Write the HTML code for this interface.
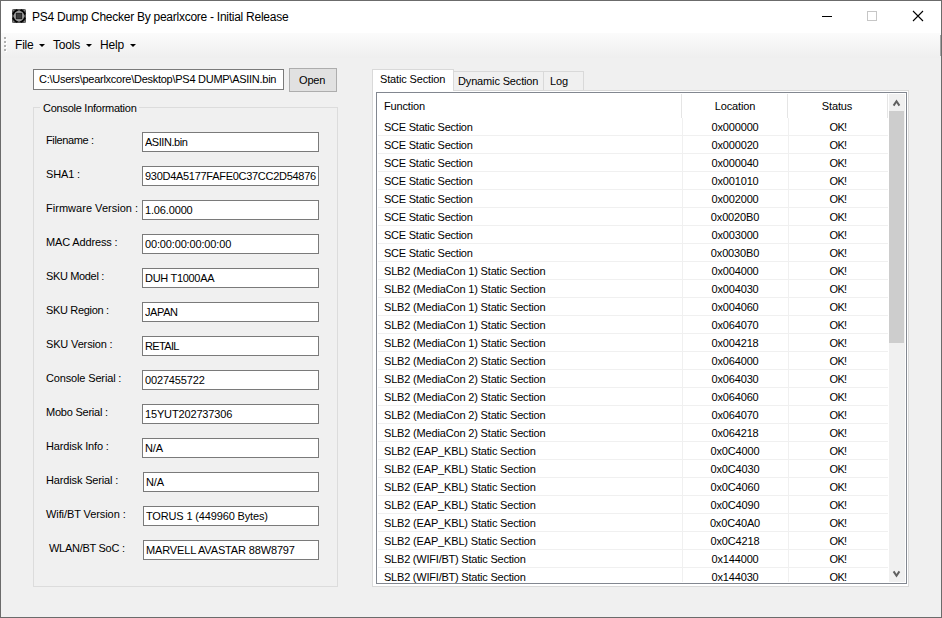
<!DOCTYPE html>
<html><head><meta charset="utf-8"><style>
*{margin:0;padding:0;box-sizing:border-box}
html,body{width:942px;height:618px;overflow:hidden;background:#f0f0f0}
body{position:relative;font-family:"Liberation Sans",sans-serif;font-size:11px;color:#000}
.a{position:absolute}
.t{position:absolute;white-space:pre;line-height:13px;font-size:11px;letter-spacing:-0.15px}
.c{position:absolute;white-space:pre;line-height:13px;font-size:11px;letter-spacing:-0.15px;text-align:center}
.tb{position:absolute;background:#fff;border:1px solid #7a7a7a}
</style></head><body>

<div class="a" style="left:0;top:0;width:942px;height:618px;border:1px solid #6b6b6b"></div>
<div class="a" style="left:1px;top:1px;width:940px;height:32px;background:#fff"></div>
<svg class="a" style="left:12px;top:9px" width="14" height="14" viewBox="0 0 14 14">
<rect x="0" y="0" width="14" height="14" rx="1.5" fill="#505050"/>
<path d="M1.6 4.6 L4.6 1.6 M9.4 1.6 L12.4 4.6 M1.6 9.4 L4.6 12.4 M12.4 9.4 L9.4 12.4" stroke="#000" stroke-width="2.4" stroke-linecap="round"/>
<circle cx="1.3" cy="1.3" r="0.7" fill="#8a8a8a"/><circle cx="12.7" cy="1.3" r="0.7" fill="#8a8a8a"/>
<circle cx="1.3" cy="12.7" r="0.7" fill="#8a8a8a"/><circle cx="12.7" cy="12.7" r="0.7" fill="#8a8a8a"/>
<circle cx="7" cy="7" r="4.0" fill="none" stroke="#9a9a9a" stroke-width="2.4"/>
<rect x="4.3" y="4.3" width="5.4" height="5.4" fill="#3a3a3a" stroke="#1c1c1c" stroke-width="0.8"/>
</svg>
<div class="a" style="left:32px;top:9px;font-size:12px;line-height:16px;white-space:pre;letter-spacing:-0.26px">PS4 Dump Checker By pearlxcore - Initial Release</div>
<div class="a" style="left:822px;top:16px;width:10px;height:1px;background:#000"></div>
<div class="a" style="left:867px;top:11px;width:10px;height:10px;border:1px solid #c6c6c6"></div>
<svg class="a" style="left:912px;top:10px" width="12" height="12" viewBox="0 0 12 12"><path d="M1 1 L11 11 M11 1 L1 11" stroke="#000" stroke-width="1.1"/></svg>
<div class="a" style="left:1px;top:33px;width:940px;height:25px;background:linear-gradient(#fbfbfb,#efefef)"></div>
<div class="a" style="left:5px;top:38px;width:2px;height:2px;background:#fff"></div>
<div class="a" style="left:4px;top:37px;width:2px;height:2px;background:#b0b0b0"></div>
<div class="a" style="left:5px;top:42px;width:2px;height:2px;background:#fff"></div>
<div class="a" style="left:4px;top:41px;width:2px;height:2px;background:#b0b0b0"></div>
<div class="a" style="left:5px;top:46px;width:2px;height:2px;background:#fff"></div>
<div class="a" style="left:4px;top:45px;width:2px;height:2px;background:#b0b0b0"></div>
<div class="a" style="left:5px;top:50px;width:2px;height:2px;background:#fff"></div>
<div class="a" style="left:4px;top:49px;width:2px;height:2px;background:#b0b0b0"></div>
<div class="a" style="left:15px;top:37px;font-size:12px;line-height:16px;white-space:pre;letter-spacing:-0.2px">File</div>
<div class="a" style="left:39px;top:44px;width:0;height:0;border-left:3px solid transparent;border-right:3px solid transparent;border-top:3px solid #000"></div>
<div class="a" style="left:53px;top:37px;font-size:12px;line-height:16px;white-space:pre;letter-spacing:-0.2px">Tools</div>
<div class="a" style="left:86px;top:44px;width:0;height:0;border-left:3px solid transparent;border-right:3px solid transparent;border-top:3px solid #000"></div>
<div class="a" style="left:100px;top:37px;font-size:12px;line-height:16px;white-space:pre;letter-spacing:-0.2px">Help</div>
<div class="a" style="left:130px;top:44px;width:0;height:0;border-left:3px solid transparent;border-right:3px solid transparent;border-top:3px solid #000"></div>
<div class="a" style="left:940px;top:35px;width:1px;height:21px;background:#a4a4a4"></div>
<div class="tb" style="left:33px;top:69px;width:251px;height:21px"></div>
<div class="t" style="left:39px;top:73px;letter-spacing:-0.265px">C:\Users\pearlxcore\Desktop\PS4 DUMP\ASIIN.bin</div>
<div class="a" style="left:289px;top:68px;width:48px;height:24px;background:#e1e1e1;border:1px solid #adadad"></div>
<div class="t" style="left:299px;top:74px;">Open</div>
<div class="a" style="left:33px;top:107px;width:305px;height:480px;border:1px solid #dcdcdc"></div>
<div class="a" style="left:40px;top:100px;width:99px;height:14px;background:#f0f0f0"></div>
<div class="t" style="left:43px;top:102px;letter-spacing:-0.26px">Console Information</div>
<div class="t" style="left:46px;top:134px;letter-spacing:-0.372px">Filename :</div>
<div class="tb" style="left:142px;top:132px;width:177px;height:20px"></div>
<div class="t" style="left:145px;top:136px;width:173px;overflow:hidden;letter-spacing:-0.463px">ASIIN.bin</div>
<div class="t" style="left:46px;top:168px;letter-spacing:-0.150px">SHA1 :</div>
<div class="tb" style="left:142px;top:166px;width:177px;height:20px"></div>
<div class="t" style="left:145px;top:170px;width:173px;overflow:hidden;letter-spacing:-0.288px">930D4A5177FAFE0C37CC2D54876</div>
<div class="t" style="left:46px;top:202px;letter-spacing:0.026px">Firmware Version :</div>
<div class="tb" style="left:142px;top:200px;width:177px;height:20px"></div>
<div class="t" style="left:145px;top:204px;width:173px;overflow:hidden;letter-spacing:-0.150px">1.06.0000</div>
<div class="t" style="left:46px;top:236px;letter-spacing:-0.150px">MAC Address :</div>
<div class="tb" style="left:142px;top:234px;width:177px;height:20px"></div>
<div class="t" style="left:145px;top:238px;width:173px;overflow:hidden;letter-spacing:-0.150px">00:00:00:00:00:00</div>
<div class="t" style="left:46px;top:270px;letter-spacing:-0.350px">SKU Model :</div>
<div class="tb" style="left:142px;top:268px;width:177px;height:20px"></div>
<div class="t" style="left:145px;top:272px;width:173px;overflow:hidden;letter-spacing:-0.300px">DUH T1000AA</div>
<div class="t" style="left:46px;top:304px;letter-spacing:-0.332px">SKU Region :</div>
<div class="tb" style="left:142px;top:302px;width:177px;height:20px"></div>
<div class="t" style="left:145px;top:306px;width:173px;overflow:hidden;letter-spacing:-0.400px">JAPAN</div>
<div class="t" style="left:46px;top:338px;letter-spacing:-0.150px">SKU Version :</div>
<div class="tb" style="left:142px;top:336px;width:177px;height:20px"></div>
<div class="t" style="left:145px;top:340px;width:173px;overflow:hidden;letter-spacing:-0.650px">RETAIL</div>
<div class="t" style="left:46px;top:372px;letter-spacing:-0.150px">Console Serial :</div>
<div class="tb" style="left:142px;top:370px;width:177px;height:20px"></div>
<div class="t" style="left:145px;top:374px;width:173px;overflow:hidden;letter-spacing:-0.150px">0027455722</div>
<div class="t" style="left:46px;top:406px;letter-spacing:-0.233px">Mobo Serial :</div>
<div class="tb" style="left:142px;top:404px;width:177px;height:20px"></div>
<div class="t" style="left:145px;top:408px;width:173px;overflow:hidden;letter-spacing:-0.150px">15YUT202737306</div>
<div class="t" style="left:46px;top:440px;letter-spacing:-0.150px">Hardisk Info :</div>
<div class="tb" style="left:142px;top:438px;width:177px;height:20px"></div>
<div class="t" style="left:145px;top:442px;width:173px;overflow:hidden;letter-spacing:-0.150px">N/A</div>
<div class="t" style="left:46px;top:474px;letter-spacing:-0.150px">Hardisk Serial :</div>
<div class="tb" style="left:143px;top:472px;width:176px;height:20px"></div>
<div class="t" style="left:146px;top:476px;width:172px;overflow:hidden;letter-spacing:-0.150px">N/A</div>
<div class="t" style="left:46px;top:508px;letter-spacing:-0.087px">Wifi/BT Version :</div>
<div class="tb" style="left:143px;top:506px;width:176px;height:20px"></div>
<div class="t" style="left:146px;top:510px;width:172px;overflow:hidden;letter-spacing:-0.150px">TORUS 1 (449960 Bytes)</div>
<div class="t" style="left:49px;top:542px;letter-spacing:-0.275px">WLAN/BT SoC :</div>
<div class="tb" style="left:143px;top:540px;width:176px;height:20px"></div>
<div class="t" style="left:146px;top:544px;width:172px;overflow:hidden;letter-spacing:-0.150px">MARVELL AVASTAR 88W8797</div>
<div class="a" style="left:372px;top:90px;width:537px;height:497px;background:#fff;border:1px solid #d9d9d9"></div>
<div class="a" style="left:453px;top:71px;width:91px;height:19px;background:#f0f0f0;border:1px solid #d9d9d9;border-bottom:none"></div>
<div class="a" style="left:543px;top:71px;width:41px;height:19px;background:#f0f0f0;border:1px solid #d9d9d9;border-bottom:none"></div>
<div class="a" style="left:372px;top:69px;width:82px;height:22px;background:#fff;border:1px solid #d9d9d9;border-bottom:none"></div>
<div class="t" style="left:380px;top:73px;">Static Section</div>
<div class="t" style="left:458px;top:75px;">Dynamic Section</div>
<div class="t" style="left:550px;top:75px;">Log</div>
<div class="a" style="left:376px;top:92px;width:531px;height:492px;background:#fff;border:1px solid #828790;overflow:hidden">
</div>
<div class="a" style="left:681px;top:94px;width:1px;height:24px;background:#e5e5e5"></div>
<div class="a" style="left:787px;top:94px;width:1px;height:24px;background:#e5e5e5"></div>
<div class="a" style="left:887px;top:94px;width:1px;height:24px;background:#e5e5e5"></div>
<div class="t" style="left:384px;top:100px;">Function</div>
<div class="c" style="left:682px;top:100px;width:106px">Location</div>
<div class="c" style="left:787px;top:100px;width:100px">Status</div>
<div class="a" style="left:378px;top:94px;width:511px;height:489px;overflow:hidden">
<div class="a" style="left:0;top:41px;width:510px;height:1px;background:#f0f0f0"></div>
<div class="t" style="left:6px;top:27px;letter-spacing:-0.24px">SCE Static Section</div>
<div class="c" style="left:304px;top:27px;width:106px">0x000000</div>
<div class="c" style="left:410px;top:27px;width:100px;letter-spacing:-0.6px">OK!</div>
<div class="a" style="left:0;top:59px;width:510px;height:1px;background:#f0f0f0"></div>
<div class="t" style="left:6px;top:45px;letter-spacing:-0.24px">SCE Static Section</div>
<div class="c" style="left:304px;top:45px;width:106px">0x000020</div>
<div class="c" style="left:410px;top:45px;width:100px;letter-spacing:-0.6px">OK!</div>
<div class="a" style="left:0;top:77px;width:510px;height:1px;background:#f0f0f0"></div>
<div class="t" style="left:6px;top:63px;letter-spacing:-0.24px">SCE Static Section</div>
<div class="c" style="left:304px;top:63px;width:106px">0x000040</div>
<div class="c" style="left:410px;top:63px;width:100px;letter-spacing:-0.6px">OK!</div>
<div class="a" style="left:0;top:95px;width:510px;height:1px;background:#f0f0f0"></div>
<div class="t" style="left:6px;top:81px;letter-spacing:-0.24px">SCE Static Section</div>
<div class="c" style="left:304px;top:81px;width:106px">0x001010</div>
<div class="c" style="left:410px;top:81px;width:100px;letter-spacing:-0.6px">OK!</div>
<div class="a" style="left:0;top:113px;width:510px;height:1px;background:#f0f0f0"></div>
<div class="t" style="left:6px;top:99px;letter-spacing:-0.24px">SCE Static Section</div>
<div class="c" style="left:304px;top:99px;width:106px">0x002000</div>
<div class="c" style="left:410px;top:99px;width:100px;letter-spacing:-0.6px">OK!</div>
<div class="a" style="left:0;top:131px;width:510px;height:1px;background:#f0f0f0"></div>
<div class="t" style="left:6px;top:117px;letter-spacing:-0.24px">SCE Static Section</div>
<div class="c" style="left:304px;top:117px;width:106px">0x0020B0</div>
<div class="c" style="left:410px;top:117px;width:100px;letter-spacing:-0.6px">OK!</div>
<div class="a" style="left:0;top:149px;width:510px;height:1px;background:#f0f0f0"></div>
<div class="t" style="left:6px;top:135px;letter-spacing:-0.24px">SCE Static Section</div>
<div class="c" style="left:304px;top:135px;width:106px">0x003000</div>
<div class="c" style="left:410px;top:135px;width:100px;letter-spacing:-0.6px">OK!</div>
<div class="a" style="left:0;top:167px;width:510px;height:1px;background:#f0f0f0"></div>
<div class="t" style="left:6px;top:153px;letter-spacing:-0.24px">SCE Static Section</div>
<div class="c" style="left:304px;top:153px;width:106px">0x0030B0</div>
<div class="c" style="left:410px;top:153px;width:100px;letter-spacing:-0.6px">OK!</div>
<div class="a" style="left:0;top:185px;width:510px;height:1px;background:#f0f0f0"></div>
<div class="t" style="left:6px;top:171px;letter-spacing:-0.17px">SLB2 (MediaCon 1) Static Section</div>
<div class="c" style="left:304px;top:171px;width:106px">0x004000</div>
<div class="c" style="left:410px;top:171px;width:100px;letter-spacing:-0.6px">OK!</div>
<div class="a" style="left:0;top:203px;width:510px;height:1px;background:#f0f0f0"></div>
<div class="t" style="left:6px;top:189px;letter-spacing:-0.17px">SLB2 (MediaCon 1) Static Section</div>
<div class="c" style="left:304px;top:189px;width:106px">0x004030</div>
<div class="c" style="left:410px;top:189px;width:100px;letter-spacing:-0.6px">OK!</div>
<div class="a" style="left:0;top:221px;width:510px;height:1px;background:#f0f0f0"></div>
<div class="t" style="left:6px;top:207px;letter-spacing:-0.17px">SLB2 (MediaCon 1) Static Section</div>
<div class="c" style="left:304px;top:207px;width:106px">0x004060</div>
<div class="c" style="left:410px;top:207px;width:100px;letter-spacing:-0.6px">OK!</div>
<div class="a" style="left:0;top:239px;width:510px;height:1px;background:#f0f0f0"></div>
<div class="t" style="left:6px;top:225px;letter-spacing:-0.17px">SLB2 (MediaCon 1) Static Section</div>
<div class="c" style="left:304px;top:225px;width:106px">0x064070</div>
<div class="c" style="left:410px;top:225px;width:100px;letter-spacing:-0.6px">OK!</div>
<div class="a" style="left:0;top:257px;width:510px;height:1px;background:#f0f0f0"></div>
<div class="t" style="left:6px;top:243px;letter-spacing:-0.17px">SLB2 (MediaCon 1) Static Section</div>
<div class="c" style="left:304px;top:243px;width:106px">0x004218</div>
<div class="c" style="left:410px;top:243px;width:100px;letter-spacing:-0.6px">OK!</div>
<div class="a" style="left:0;top:275px;width:510px;height:1px;background:#f0f0f0"></div>
<div class="t" style="left:6px;top:261px;letter-spacing:-0.17px">SLB2 (MediaCon 2) Static Section</div>
<div class="c" style="left:304px;top:261px;width:106px">0x064000</div>
<div class="c" style="left:410px;top:261px;width:100px;letter-spacing:-0.6px">OK!</div>
<div class="a" style="left:0;top:293px;width:510px;height:1px;background:#f0f0f0"></div>
<div class="t" style="left:6px;top:279px;letter-spacing:-0.17px">SLB2 (MediaCon 2) Static Section</div>
<div class="c" style="left:304px;top:279px;width:106px">0x064030</div>
<div class="c" style="left:410px;top:279px;width:100px;letter-spacing:-0.6px">OK!</div>
<div class="a" style="left:0;top:311px;width:510px;height:1px;background:#f0f0f0"></div>
<div class="t" style="left:6px;top:297px;letter-spacing:-0.17px">SLB2 (MediaCon 2) Static Section</div>
<div class="c" style="left:304px;top:297px;width:106px">0x064060</div>
<div class="c" style="left:410px;top:297px;width:100px;letter-spacing:-0.6px">OK!</div>
<div class="a" style="left:0;top:329px;width:510px;height:1px;background:#f0f0f0"></div>
<div class="t" style="left:6px;top:315px;letter-spacing:-0.17px">SLB2 (MediaCon 2) Static Section</div>
<div class="c" style="left:304px;top:315px;width:106px">0x064070</div>
<div class="c" style="left:410px;top:315px;width:100px;letter-spacing:-0.6px">OK!</div>
<div class="a" style="left:0;top:347px;width:510px;height:1px;background:#f0f0f0"></div>
<div class="t" style="left:6px;top:333px;letter-spacing:-0.17px">SLB2 (MediaCon 2) Static Section</div>
<div class="c" style="left:304px;top:333px;width:106px">0x064218</div>
<div class="c" style="left:410px;top:333px;width:100px;letter-spacing:-0.6px">OK!</div>
<div class="a" style="left:0;top:365px;width:510px;height:1px;background:#f0f0f0"></div>
<div class="t" style="left:6px;top:351px;letter-spacing:-0.17px">SLB2 (EAP_KBL) Static Section</div>
<div class="c" style="left:304px;top:351px;width:106px">0x0C4000</div>
<div class="c" style="left:410px;top:351px;width:100px;letter-spacing:-0.6px">OK!</div>
<div class="a" style="left:0;top:383px;width:510px;height:1px;background:#f0f0f0"></div>
<div class="t" style="left:6px;top:369px;letter-spacing:-0.17px">SLB2 (EAP_KBL) Static Section</div>
<div class="c" style="left:304px;top:369px;width:106px">0x0C4030</div>
<div class="c" style="left:410px;top:369px;width:100px;letter-spacing:-0.6px">OK!</div>
<div class="a" style="left:0;top:401px;width:510px;height:1px;background:#f0f0f0"></div>
<div class="t" style="left:6px;top:387px;letter-spacing:-0.17px">SLB2 (EAP_KBL) Static Section</div>
<div class="c" style="left:304px;top:387px;width:106px">0x0C4060</div>
<div class="c" style="left:410px;top:387px;width:100px;letter-spacing:-0.6px">OK!</div>
<div class="a" style="left:0;top:419px;width:510px;height:1px;background:#f0f0f0"></div>
<div class="t" style="left:6px;top:405px;letter-spacing:-0.17px">SLB2 (EAP_KBL) Static Section</div>
<div class="c" style="left:304px;top:405px;width:106px">0x0C4090</div>
<div class="c" style="left:410px;top:405px;width:100px;letter-spacing:-0.6px">OK!</div>
<div class="a" style="left:0;top:437px;width:510px;height:1px;background:#f0f0f0"></div>
<div class="t" style="left:6px;top:423px;letter-spacing:-0.17px">SLB2 (EAP_KBL) Static Section</div>
<div class="c" style="left:304px;top:423px;width:106px">0x0C40A0</div>
<div class="c" style="left:410px;top:423px;width:100px;letter-spacing:-0.6px">OK!</div>
<div class="a" style="left:0;top:455px;width:510px;height:1px;background:#f0f0f0"></div>
<div class="t" style="left:6px;top:441px;letter-spacing:-0.17px">SLB2 (EAP_KBL) Static Section</div>
<div class="c" style="left:304px;top:441px;width:106px">0x0C4218</div>
<div class="c" style="left:410px;top:441px;width:100px;letter-spacing:-0.6px">OK!</div>
<div class="a" style="left:0;top:473px;width:510px;height:1px;background:#f0f0f0"></div>
<div class="t" style="left:6px;top:459px;letter-spacing:-0.22px">SLB2 (WIFI/BT) Static Section</div>
<div class="c" style="left:304px;top:459px;width:106px">0x144000</div>
<div class="c" style="left:410px;top:459px;width:100px;letter-spacing:-0.6px">OK!</div>
<div class="a" style="left:0;top:491px;width:510px;height:1px;background:#f0f0f0"></div>
<div class="t" style="left:6px;top:477px;letter-spacing:-0.22px">SLB2 (WIFI/BT) Static Section</div>
<div class="c" style="left:304px;top:477px;width:106px">0x144030</div>
<div class="c" style="left:410px;top:477px;width:100px;letter-spacing:-0.6px">OK!</div>
<div class="a" style="left:304px;top:24px;width:1px;height:464px;background:#f0f0f0"></div>
<div class="a" style="left:410px;top:24px;width:1px;height:464px;background:#f0f0f0"></div>
</div>
<div class="a" style="left:889px;top:94px;width:16px;height:488px;background:#f0f0f0"></div>
<div class="a" style="left:889px;top:111px;width:15px;height:232px;background:#cdcdcd"></div>
<svg class="a" style="left:889px;top:94px" width="16" height="17" viewBox="0 0 16 17"><path d="M4.6 11.6 L7.5 7.3 L10.4 11.6" fill="none" stroke="#606060" stroke-width="2"/></svg>
<svg class="a" style="left:889px;top:565px" width="16" height="17" viewBox="0 0 16 17"><path d="M4.6 6.4 L7.5 10.7 L10.4 6.4" fill="none" stroke="#606060" stroke-width="2"/></svg>
</body></html>
